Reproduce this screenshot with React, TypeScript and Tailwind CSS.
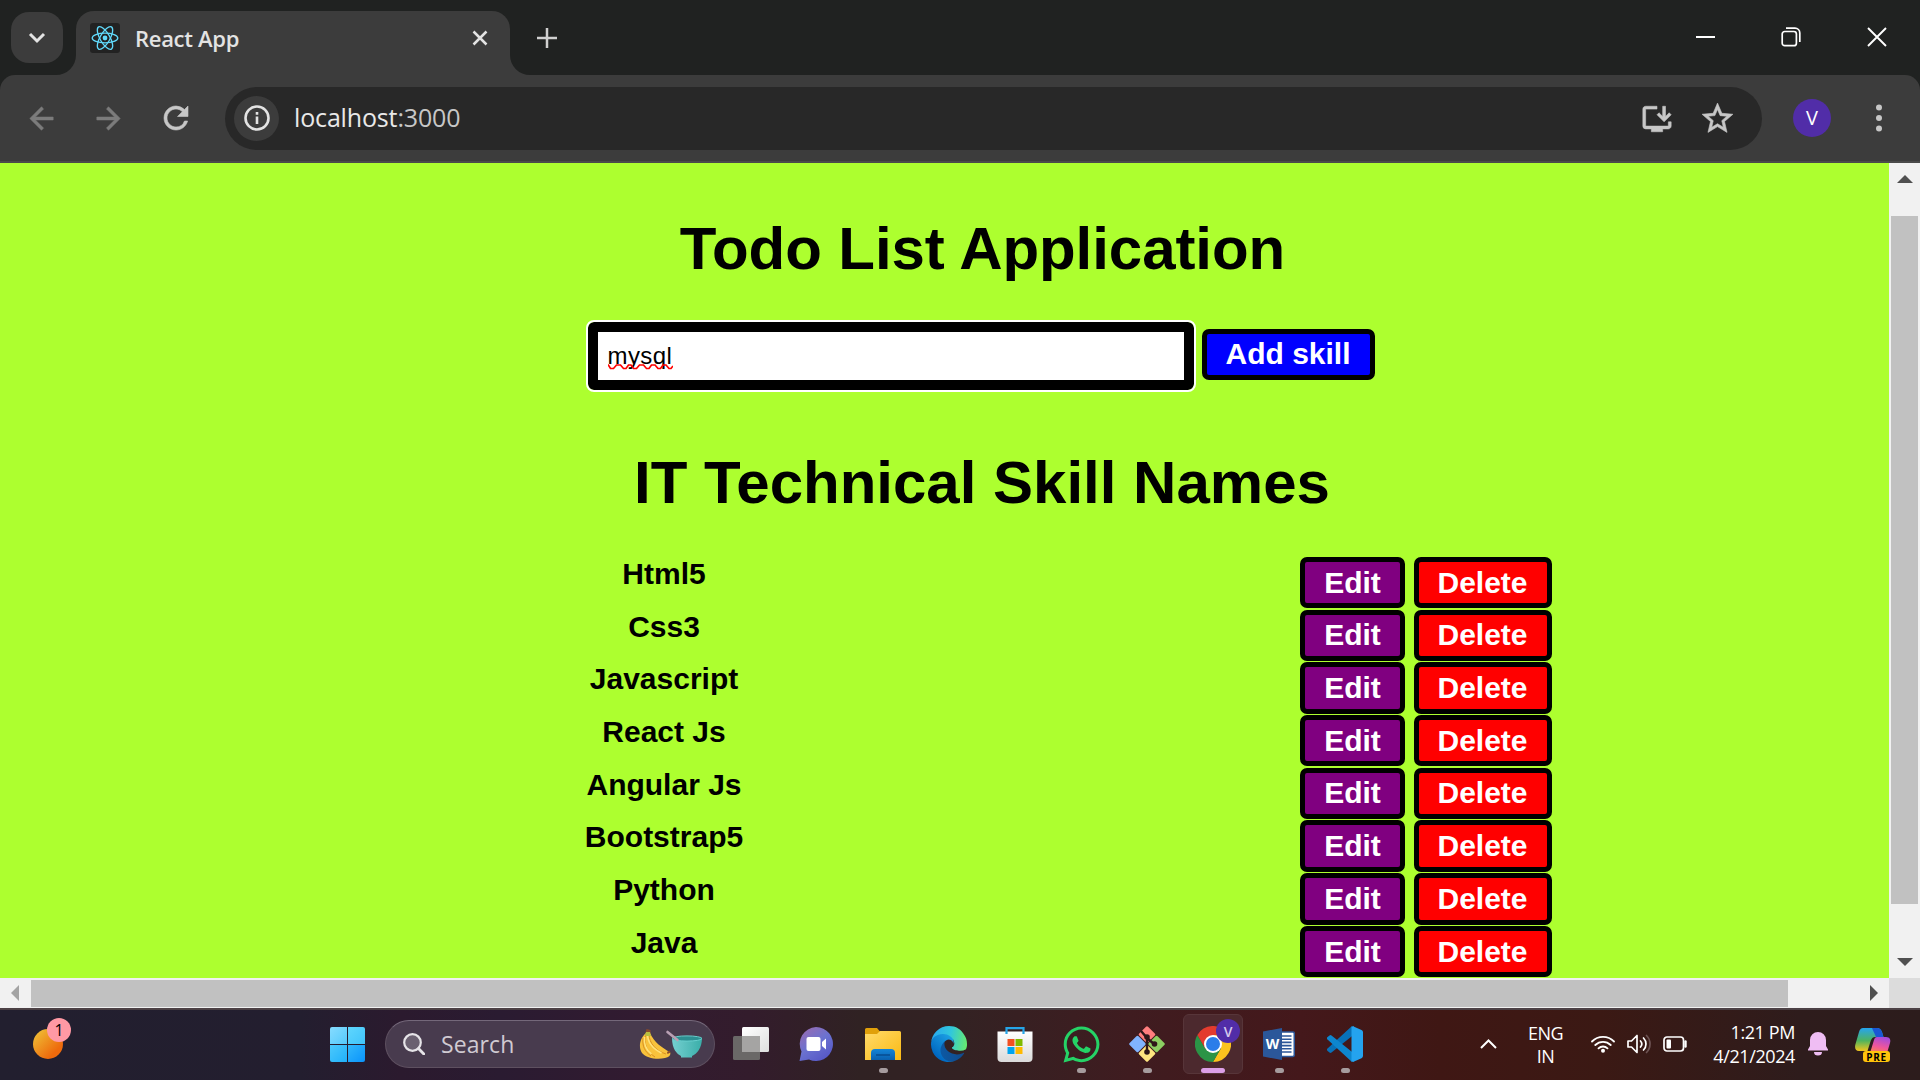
import React from "react";
import { FaWhatsapp } from "react-icons/fa";
import { MdArrowBack, MdArrowForward, MdRefresh, MdStarBorder, MdInstallDesktop } from "react-icons/md";

const skills = ["Html5", "Css3", "Javascript", "React Js", "Angular Js", "Bootstrap5", "Python", "Java"];

function ReactLogo() {
  return (
    <svg viewBox="0 0 30 30" className="size-[30px] shrink-0">
      <rect width="30" height="30" rx="3" fill="#222222" />
      <g fill="none" stroke="#61dafb" strokeWidth="1.3">
        <ellipse cx="15" cy="15" rx="12.8" ry="4.9" />
        <ellipse cx="15" cy="15" rx="12.8" ry="4.9" transform="rotate(60 15 15)" />
        <ellipse cx="15" cy="15" rx="12.8" ry="4.9" transform="rotate(120 15 15)" />
      </g>
      <circle cx="15" cy="15" r="2.4" fill="#61dafb" />
    </svg>
  );
}

function TabStrip() {
  return (
    <div className="flex h-[75px] shrink-0 items-start bg-[#202221]">
      <div className="ml-[11px] mt-3 flex h-[51px] w-[52px] items-center justify-center rounded-[18px] bg-[#3c3c3c]">
        <svg viewBox="0 0 18 12" className="w-[18px]" fill="none" stroke="#e3e3e3" strokeWidth="3">
          <path d="M2 2l7 7 7-7" />
        </svg>
      </div>
      <div className="relative ml-[13px] mt-[11px] flex h-16 w-[434px] items-center rounded-t-[18px] bg-[#3c3c3c] pb-[10px] pl-[14px]">
        <svg viewBox="0 0 20 20" className="absolute -left-5 bottom-0 size-5" fill="#3c3c3c">
          <path d="M20 0v20H0A20 20 0 0 0 20 0z" />
        </svg>
        <svg viewBox="0 0 20 20" className="absolute -right-5 bottom-0 size-5" fill="#3c3c3c">
          <path d="M0 0v20h20A20 20 0 0 1 0 0z" />
        </svg>
        <ReactLogo />
        <span className="ml-[15px] mt-px flex-1 whitespace-nowrap text-[22px] font-semibold tracking-[-0.3px] text-[#e3e3e3]">React App</span>
        <svg viewBox="0 0 16 16" className="mr-[22px] size-4" stroke="#e3e3e3" strokeWidth="2.5">
          <path d="M1.500 1.500l13 13M14.500 1.500l-13 13" />
        </svg>
      </div>
      <svg viewBox="0 0 20 20" className="ml-[27px] mt-[28px] size-5" stroke="#d0d0d0" strokeWidth="2.5">
        <path d="M10 0v20M0 10h20" />
      </svg>
      <div className="ml-auto mr-[33px] mt-[27px] flex items-center">
        <div className="mr-[66px] h-[2px] w-[19px] bg-white" />
        <svg viewBox="0 0 20 20" className="mr-[66px] size-5" fill="none" stroke="#fff" strokeWidth="1.7">
          <rect x="1.2" y="4.5" width="14.2" height="14.2" rx="2.5" />
          <path d="M5 1.2h9a4.8 4.8 0 0 1 4.8 4.8v9" />
        </svg>
        <svg viewBox="0 0 20 20" className="size-5" stroke="#fff" strokeWidth="1.9">
          <path d="M1 1l18 18M19 1L1 19" />
        </svg>
      </div>
    </div>
  );
}

function Toolbar() {
  return (
    <div className="h-[88px] shrink-0 bg-[#202221]">
      <div className="flex h-full items-center rounded-t-[15px] border-b-2 border-[#4a4a4a] bg-[#3c3c3c]">
        <MdArrowBack className="ml-[24px] size-[35px] text-[#7c7c7c] [&>path:not(:first-child)]:[stroke-width:0.4]" />
        <MdArrowForward className="ml-[32px] size-[35px] text-[#7c7c7c] [&>path:not(:first-child)]:[stroke-width:0.4]" />
        <MdRefresh className="ml-[32px] size-[36px] text-[#c7c7c7] [&>path:not(:first-child)]:[stroke-width:0.4]" />
        <div className="ml-[31px] flex h-[63px] w-[1537px] items-center rounded-full bg-[#282828]">
          <div className="ml-[9px] flex size-[45px] items-center justify-center rounded-full bg-[#3c3c3c]">
            <svg viewBox="0 0 26 26" className="size-[26px]" fill="none" stroke="#e3e3e3" strokeWidth="2.6">
              <circle cx="13" cy="13" r="11.5" />
              <path d="M13 11.5v7.500M13 7v2.700" />
            </svg>
          </div>
          <span className="ml-[15px] flex-1 text-[25px] tracking-[-0.15px] text-[#e8e8e8]">
            localhost<span className="text-[#c7c7c7]">:3000</span>
          </span>
          <MdInstallDesktop className="mr-[25px] mt-px size-[34px] text-[#c7c7c7] [&>path:not(:first-child)]:[stroke-width:0.4]" />
          <MdStarBorder className="mr-[26px] size-[37px] text-[#c7c7c7] [&>path:not(:first-child)]:[stroke-width:0.4]" />
        </div>
        <div className="ml-[31px] flex size-[38px] items-center justify-center rounded-full bg-[#512da8] text-[20px] text-white">V</div>
        <svg viewBox="0 0 6 28" className="ml-[45px] h-7 w-[6px]" fill="#c7c7c7">
          <circle cx="3" cy="3.5" r="3" />
          <circle cx="3" cy="14" r="3" />
          <circle cx="3" cy="24.5" r="3" />
        </svg>
      </div>
    </div>
  );
}

function SpellingMark() {
  return (
    <svg viewBox="0 0 65 6" className="absolute left-0 top-[22px] h-[6px] w-[65px]" fill="none" stroke="#ff0000" strokeWidth="1.700">
      <path d="M0 .500L2.500 4.500h3L8.500 1h4L15.500 4.500h2.500L20.500 1h2.500L25.500 4.500h3L31.500 1h4L38.500 4.500h2.500L43.500 1h3.500L50 4.500h2.500L55 1h3L61 4.500h2L65 2" />
    </svg>
  );
}

function TodoPage() {
  return (
    <main className="h-[815px] w-[1889px] overflow-hidden bg-[#adff2f] font-['Liberation_Sans',Arial,sans-serif] text-black">
      <div className="flex w-[1964px] flex-col items-center pt-[51px]">
        <h1 className="whitespace-nowrap pl-px text-[60px] font-bold leading-[70px] tracking-[-0.06px]">Todo List Application</h1>
        <div className="mt-[36px] flex h-[72px] w-[789px] items-center">
          <div className="flex h-[68px] w-[606px] items-center rounded-[6px] border-[10px] border-black bg-white pl-[10px] outline-2 outline-white">
            <span className="relative text-[24px] leading-[28px] tracking-[0.4px]">
              mysql
              <SpellingMark />
            </span>
          </div>
          <button className="ml-2 mt-[-3px] h-[51px] w-[173px] rounded-[7px] border-[5px] border-black bg-[#0000ff] pb-[2px] text-[30px] font-bold leading-[34px] text-white">Add skill</button>
        </div>
        <h1 className="mt-[56px] whitespace-nowrap text-[60px] font-bold leading-[70px]">IT Technical Skill Names</h1>
        <div className="mt-[39px] flex w-full flex-col">
          {skills.map((s) => (
            <div key={s} className="flex h-[52.7px] items-start pl-[564px]">
              <h2 className="w-[200px] text-center text-[30px] font-bold leading-[34px]">{s}</h2>
              <button className="ml-[536px] h-[51.4px] w-[105px] rounded-[7px] border-[5px] border-black bg-[#800080] text-[30px] font-bold leading-[34px] text-white">Edit</button>
              <button className="ml-[9px] h-[51.4px] w-[138px] rounded-[7px] border-[5px] border-black bg-[#ff0000] pr-px text-[30px] font-bold leading-[34px] text-white">Delete</button>
            </div>
          ))}
        </div>
      </div>
    </main>
  );
}

function VerticalScrollbar() {
  return (
    <div className="flex w-[31px] flex-col items-center bg-[#f1f1f1]">
      <svg viewBox="0 0 16 8" className="mt-3 h-2 w-4" fill="#505050"><path d="M8 0l8 8H0z" /></svg>
      <div className="mt-[33px] h-[688px] w-[27px] bg-[#c1c1c1]" />
      <svg viewBox="0 0 16 8" className="mt-[54px] h-2 w-4" fill="#505050"><path d="M8 8l8-8H0z" /></svg>
    </div>
  );
}

function HorizontalScrollbar() {
  return (
    <div className="flex h-[30px] shrink-0">
      <div className="flex w-[1889px] items-center bg-[#f1f1f1]">
        <svg viewBox="0 0 8 16" className="ml-[11px] h-4 w-2" fill="#a3a3a3"><path d="M8 0v16L0 8z" /></svg>
        <div className="ml-3 mt-px h-[27px] w-[1757px] bg-[#c1c1c1]" />
        <svg viewBox="0 0 8 16" className="ml-[82px] h-4 w-2" fill="#505050"><path d="M0 0v16l8-8z" /></svg>
      </div>
      <div className="w-[31px] bg-[#dcdcdc]" />
    </div>
  );
}

function BananaBowl() {
  return (
    <svg viewBox="0 0 64 32" className="h-8 w-16">
      <defs>
        <linearGradient id="bowl" x1="0" y1="0" x2="1" y2="0">
          <stop offset="0" stopColor="#75cfd0" />
          <stop offset="1" stopColor="#3aaea9" />
        </linearGradient>
      </defs>
      <path d="M7 5C1 10-1 19 3 25c4 5 15 7 23 5 5-1 6-3 5-6C23 20 15 14 11 5z" fill="#f8c23c" />
      <path d="M7 6c-3 9 1 18 9 23M10 6c0 9 7 17 17 20M4 10c-1 8 2 14 8 18" fill="none" stroke="#d98f20" strokeWidth="1" />
      <path d="M8.500 6c0 9 6 15 14 19M5.500 9c-1 8 3 14 7 17" fill="none" stroke="#ffe27a" strokeWidth="1.500" />
      <path d="M6.500 5l1-4 4 1v4z" fill="#8a4b2a" />
      <path d="M6 8l1-4h4l1 4z" fill="#b8bf3f" />
      <path d="M28 24l2.500-1.500 1 2-3 1.500z" fill="#8a4b2a" />
      <path d="M33 10c0 11 5 16 9 18v1.500h11V28c5-2 10-8 10-18z" fill="url(#bowl)" />
      <ellipse cx="48" cy="10.500" rx="15" ry="2.600" fill="#2d8f91" stroke="#67cfcd" strokeWidth="1" />
      <path d="M28.500 4l10 8" stroke="#b9a0b4" strokeWidth="2.600" strokeLinecap="round" />
    </svg>
  );
}

function TaskViewIcon() {
  return (
    <svg viewBox="0 0 36 36" className="size-9">
      <defs><linearGradient id="tv" x1="0" y1="0" x2="1" y2="1"><stop stopColor="#fff" /><stop offset="1" stopColor="#dedede" /></linearGradient></defs>
      <rect x="9" y="1" width="27" height="25" rx="1.500" fill="url(#tv)" />
      <rect x="0" y="10" width="27" height="24" rx="1.500" fill="#6a6867" />
      <path d="M9 10h18v16H9z" fill="#a5a4a3" />
    </svg>
  );
}

function ChatIcon() {
  return (
    <svg viewBox="0 0 36 36" className="mr-[2px] size-9">
      <defs><linearGradient id="chat" x1="0.1" y1="0" x2="0.8" y2="1"><stop stopColor="#9a6bb0" /><stop offset=".5" stopColor="#6b72d0" /><stop offset="1" stopColor="#5455c6" /></linearGradient></defs>
      <path d="M18 1a17 17 0 1 1-7 32.500L1.500 35l2-9.500A17 17 0 0 1 18 1z" fill="url(#chat)" />
      <rect x="8.500" y="11" width="14" height="14" rx="2" fill="#fff" />
      <path d="M24 16l4-3.500v11L24 20z" fill="#fff" />
    </svg>
  );
}

function FolderIcon() {
  return (
    <svg viewBox="0 0 36 36" className="size-9">
      <defs>
        <linearGradient id="fold" x1="0" y1="0" x2="1" y2="1"><stop stopColor="#ffdb6b" /><stop offset="1" stopColor="#fbb912" /></linearGradient>
        <linearGradient id="foldb" x1="0" y1="0" x2="0" y2="1"><stop stopColor="#1385d8" /><stop offset="1" stopColor="#0a5fae" /></linearGradient>
      </defs>
      <path d="M0 3.500A1.500 1.500 0 0 1 1.500 2H12l3 3.500V12H0z" fill="#e0a00a" />
      <path d="M0 8h12l3-3h19.500A1.500 1.500 0 0 1 36 6.500V34H0z" fill="url(#fold)" />
      <path d="M6 34V27a4 4 0 0 1 4-4h16a4 4 0 0 1 4 4v7z" fill="url(#foldb)" />
      <path d="M11 29h14" stroke="#084f94" strokeWidth="1.600" />
    </svg>
  );
}

function EdgeIcon() {
  return (
    <svg viewBox="0 0 256 256" className="size-9">
      <defs>
        <linearGradient id="e1" x1="63" y1="177" x2="241" y2="177" gradientUnits="userSpaceOnUse"><stop stopColor="#0c59a4" /><stop offset="1" stopColor="#114a8b" /></linearGradient>
        <linearGradient id="e2" x1="157" y1="99" x2="46" y2="220" gradientUnits="userSpaceOnUse"><stop stopColor="#1b9de2" /><stop offset="1" stopColor="#0067c0" /></linearGradient>
        <linearGradient id="e3" x1="10" y1="80" x2="256" y2="120" gradientUnits="userSpaceOnUse"><stop stopColor="#28a9ee" /><stop offset=".5" stopColor="#31c7dc" /><stop offset="1" stopColor="#66eb6e" /></linearGradient>
      </defs>
      <path fill="url(#e1)" d="M231 190c-3 2-7 4-11 5a102 102 0 0 1-36 7c-47 0-89-33-89-75 0-11 7-22 17-27-43 2-54 46-54 72 0 74 68 81 82 81 8 0 20-2 27-4l1-1a128 128 0 0 0 67-53 4 4 0 0 0-4-5z" />
      <path fill="url(#e2)" d="M106 241a79 79 0 0 1-23-21 81 81 0 0 1 29-120c3-1 8-4 15-4a31 31 0 0 1 25 13 31 31 0 0 1 6 18c0 0 25-79-80-79C34 48 0 90 0 128a130 130 0 0 0 12 56 128 128 0 0 0 156 66 76 76 0 0 1-62-9z" />
      <path fill="url(#e3)" d="M152 149c-1 1-3 3-3 6 0 3 2 6 6 9 19 13 54 12 54 12a78 78 0 0 0 40-11 80 80 0 0 0 7-37C256 100 248 82 240 70 215 22 178 0 128 0A128 128 0 0 0 0 126c0-38 39-69 84-69 4 0 25 0 44 10a74 74 0 0 1 30 29c7 11 8 26 8 31s-3 14-10 22z" />
    </svg>
  );
}

function StoreIcon() {
  return (
    <svg viewBox="0 0 36 36" className="mr-px size-9">
      <defs><linearGradient id="st" x1="0" y1="0" x2="0" y2="1"><stop stopColor="#fff" /><stop offset="1" stopColor="#dadada" /></linearGradient></defs>
      <path d="M.500 5.500h35V32a4 4 0 0 1-4 4h-27a4 4 0 0 1-4-4z" fill="url(#st)" />
      <path d="M9.500 8V2.200h17V8" fill="none" stroke="#25a5e8" strokeWidth="2.200" />
      <path fill="#f25022" d="M10.500 13h7v7h-7z" />
      <path fill="#7fba00" d="M18.500 13h7v7h-7z" />
      <path fill="#00a4ef" d="M10.500 21h7v7h-7z" />
      <path fill="#ffb900" d="M18.500 21h7v7h-7z" />
    </svg>
  );
}

function GitIcon() {
  return (
    <svg viewBox="0 0 36 36" className="size-9">
      <g transform="rotate(45 18 18)">
        <rect x="5" y="5" width="12.500" height="12.500" rx="1.500" fill="#ff7e7e" />
        <rect x="18.500" y="5" width="12.500" height="12.500" rx="1.500" fill="#8ccf62" />
        <rect x="5" y="18.500" width="12.500" height="12.500" rx="1.500" fill="#80b3ff" />
        <rect x="18.500" y="18.500" width="12.500" height="12.500" rx="1.500" fill="#ffe680" />
      </g>
      <path d="M12 5l6 7v13M18 12l7 6" fill="none" stroke="#2e1719" strokeWidth="2.400" />
      <circle cx="18" cy="11" r="2.800" fill="#2e1719" />
      <circle cx="25.500" cy="18" r="2.800" fill="#2e1719" />
      <circle cx="18" cy="26" r="2.800" fill="#2e1719" />
    </svg>
  );
}

function ChromeIcon() {
  return (
    <svg viewBox="0 0 36 36" className="size-9">
      <path d="M18 9h15.600A18 18 0 0 1 18 36l7.800-13.500z" fill="#fcc31e" />
      <path d="M25.800 22.500L18 36A18 18 0 0 1 2.400 9l7.800 13.500z" fill="#2b9446" />
      <path d="M2.400 9a18 18 0 0 1 31.200 0H18l-7.800 13.500z" fill="#e33b2e" />
      <circle cx="18" cy="18" r="9" fill="#fff" />
      <circle cx="18" cy="18" r="7" fill="#2b7de9" />
    </svg>
  );
}

function WordIcon() {
  return (
    <div className="relative h-8 w-8">
      <svg viewBox="0 0 32 32" className="size-8">
        <rect x="16" y="4" width="15.300" height="24.500" rx="1.500" fill="#fff" stroke="#2b579a" strokeWidth="1.600" />
        <path d="M19 8h9.500M19 11.200h9.500M19 14.400h9.500M19 17.600h9.500M19 20.800h9.500M19 24h9.500" stroke="#2b579a" strokeWidth="1.600" />
        <path d="M0 3.500L19 0v32L0 28.500z" fill="#2b579a" />
      </svg>
      <span className="absolute left-[2px] top-[8px] w-[15px] text-center text-[14px] font-bold leading-4 text-white">W</span>
    </div>
  );
}

function VsCodeIcon() {
  return (
    <svg viewBox="0 0 36 36" className="size-9">
      <path d="M.500 22.500L25 0l2 8.500L4.500 26.500a1.500 1.500 0 0 1-2 0L.600 25a1.500 1.500 0 0 1-.100-2.500z" fill="#0871b8" />
      <path d="M.500 13.500L25 36l2-8.500L4.500 9.500a1.500 1.500 0 0 0-2 0L.600 11a1.500 1.500 0 0 0-.100 2.500z" fill="#0d86cf" />
      <path d="M26 .300L34.500 4A2.500 2.500 0 0 1 36 6v24a2.500 2.500 0 0 1-1.500 2.200L26 36z" fill="#24a3ef" />
      <path d="M24.500.800c.800-.800 2.500-.700 2.500.800v33c0 1.300-1.700 1.400-2.500.600z" fill="#24a3ef" />
    </svg>
  );
}

function TaskItem({ children, running }: { children: React.ReactNode; running?: boolean }) {
  return (
    <div className="relative flex h-[68px] w-[66px] items-center justify-center">
      {children}
      {running && <div className="absolute bottom-[5px] h-[5px] w-[9px] rounded-full bg-[#a69c9e]" />}
    </div>
  );
}

function Taskbar() {
  return (
    <footer className="flex h-[72px] shrink-0 border-t-2 border-[#4c4145] bg-[linear-gradient(90deg,#221f2f_0px,#231e2f_300px,#2b1a2e_400px,#2a1b31_500px,#321b30_650px,#331c2c_750px,#302223_860px,#332223_960px,#3f1c20_1130px,#44181b_1300px,#3f1714_1440px,#3b1914_1600px,#2e1c1c_1800px,#2c1c1c_1920px)] text-white">
      <div className="relative ml-[33px] mt-[19px] size-[30px] rounded-full bg-[linear-gradient(135deg,#efb531_15%,#ee6a0c_75%)]">
        <div className="absolute -top-[11px] left-[14px] flex size-6 items-center justify-center rounded-full bg-[#ff99a4] text-[16px] text-black">1</div>
      </div>
      <div className="ml-[267px] mt-[17px] grid size-[35px] grid-cols-2 gap-px overflow-hidden rounded-[2px]">
        <div className="bg-[linear-gradient(135deg,#86dcff,#55c9fb)]" />
        <div className="bg-[linear-gradient(135deg,#5fd6fd,#40c4fb)]" />
        <div className="bg-[linear-gradient(135deg,#4cc9fb,#20b0fb)]" />
        <div className="bg-[linear-gradient(135deg,#32b8fb,#0a93fb)]" />
      </div>
      <div className="ml-[20px] mt-[10px] flex h-[48px] w-[330px] items-center rounded-full border border-[#5e5060] border-t-[#74687a] bg-[#483b4e]">
        <svg viewBox="0 0 22 22" className="ml-[17px] size-[22px]" fill="none" stroke="#e6e4e8" strokeLinecap="round">
          <circle cx="9.500" cy="9.500" r="8.300" strokeWidth="2.200" fill="#6a6070" />
          <path d="M15.500 15.500l5.300 5.500" strokeWidth="2.800" />
        </svg>
        <span className="ml-[16px] mt-px flex-1 text-[23px] tracking-[0.1px] text-[#d0cad2]">Search</span>
        <div className="mr-[11px]"><BananaBowl /></div>
      </div>
      <div className="ml-[3px] flex">
        <TaskItem><TaskViewIcon /></TaskItem>
        <TaskItem><ChatIcon /></TaskItem>
        <TaskItem running><FolderIcon /></TaskItem>
        <TaskItem><EdgeIcon /></TaskItem>
        <TaskItem><StoreIcon /></TaskItem>
        <TaskItem running><FaWhatsapp className="size-[41px] text-[#25d366]" /></TaskItem>
        <TaskItem running><GitIcon /></TaskItem>
        <div className="relative mx-[3px] mt-1 flex h-[60px] w-[60px] items-center justify-center rounded-md border border-[#573539] bg-[#4c292e]">
          <ChromeIcon />
          <div className="absolute left-[32px] top-[4px] flex size-[24px] items-center justify-center rounded-full bg-[#512da8] text-[14px] font-semibold text-[#d5c8ee]">V</div>
          <div className="absolute bottom-0 h-[5px] w-6 rounded-full bg-[#dc9fe6]" />
        </div>
        <TaskItem running><WordIcon /></TaskItem>
        <TaskItem running><VsCodeIcon /></TaskItem>
      </div>
      <div className="ml-auto flex h-[68px] items-center">
        <svg viewBox="0 0 17 10" className="mr-[31px] w-[17px]" fill="none" stroke="#fff" strokeWidth="2"><path d="M1 9l7.500-7.500L16 9" /></svg>
        <div className="mt-px w-[35px] text-center text-[18px] leading-[23px] tracking-[-0.5px]">ENG<br />IN</div>
        <svg viewBox="0 0 24 18" className="ml-[28px] w-6" fill="none" stroke="#fff" strokeWidth="1.800" strokeLinecap="round">
          <path d="M1 6.500a15.500 15.500 0 0 1 22 0M4.300 10a11 11 0 0 1 15.400 0M7.500 13.300a6.500 6.500 0 0 1 9 0" />
          <circle cx="12" cy="15.800" r="2" fill="#fff" stroke="none" />
        </svg>
        <svg viewBox="0 0 24 20" className="ml-3 w-6" fill="none" stroke="#fff" strokeWidth="1.700" strokeLinecap="round" strokeLinejoin="round">
          <path d="M1 7h3.500L10 1.500v17L4.500 13H1z" />
          <path d="M13.500 7a4.500 4.500 0 0 1 0 6M16.500 4a8.500 8.500 0 0 1 0 12" />
          <path d="M19.500 1.500a12 12 0 0 1 0 17" stroke="#6d5353" />
        </svg>
        <svg viewBox="0 0 24 16" className="ml-3 w-6" fill="none" stroke="#fff" strokeWidth="1.700">
          <rect x="1" y="1" width="19.500" height="14" rx="3" />
          <rect x="3.500" y="3.500" width="4.500" height="9" rx="1" fill="#fff" stroke="none" />
          <path d="M22.500 5.500v5" strokeWidth="2.400" strokeLinecap="round" />
        </svg>
        <div className="ml-[18px] flex w-[90px] flex-col items-end whitespace-nowrap text-[18px] leading-6 tracking-[-0.4px]">
          <span>1:21 PM</span>
          <span>4/21/2024</span>
        </div>
        <svg viewBox="0 0 20 24" className="ml-[13px] w-5" fill="#efbdf3">
          <path d="M10 0a8 8 0 0 1 8 8v6l2 3.500v1H0v-1L2 14V8a8 8 0 0 1 8-8zM6 20h8a4 3.600 0 0 1-8 0z" />
        </svg>
        <div className="relative ml-[27px] mr-[29px] h-9 w-9">
          <svg viewBox="0 0 36 36" className="size-9">
            <defs>
              <linearGradient id="c1" x1="0.300" y1="0" x2="0.300" y2="1"><stop stopColor="#25a4f0" /><stop offset=".55" stopColor="#4eb35e" /><stop offset="1" stopColor="#f3c51d" /></linearGradient>
              <linearGradient id="c2" x1="0.600" y1="0" x2="0.300" y2="1"><stop stopColor="#a44bdc" /><stop offset=".6" stopColor="#f0569a" /><stop offset="1" stopColor="#f8834f" /></linearGradient>
            </defs>
            <path d="M8 2h14c3 0 4 2 5 4l1.500 5H20c-3 0-4 3-5 6l-2.500 8H4c-4 0-4.500-4-3.500-7L4 6c1-3 2-4 4-4z" fill="url(#c1)" />
            <path d="M17 2h5c3 0 4 2 5 4l1.500 5H21z" fill="#1957d4" />
            <path d="M22 11h9c4 0 5 3 4 6l-3 10H15l4-13c.500-2 1.500-3 3-3z" fill="url(#c2)" />
          </svg>
          <div className="absolute left-[8px] top-[25px] flex h-[11px] w-[27px] items-center justify-center rounded-[3px] bg-[#ffc40c] text-[10px] font-bold leading-none tracking-[0.6px] text-black">PRE</div>
        </div>
      </div>
    </footer>
  );
}

export default function App() {
  return (
    <div className="flex h-[1080px] w-[1920px] flex-col overflow-hidden font-['Open_Sans','Noto_Sans',sans-serif]">
      <TabStrip />
      <Toolbar />
      <div className="flex h-[815px] shrink-0">
        <TodoPage />
        <VerticalScrollbar />
      </div>
      <HorizontalScrollbar />
      <Taskbar />
    </div>
  );
}
